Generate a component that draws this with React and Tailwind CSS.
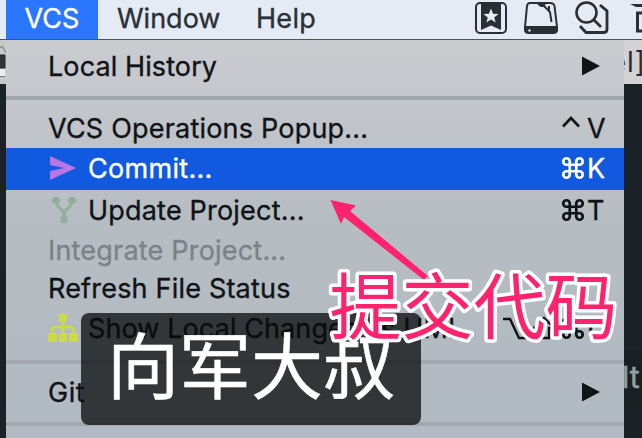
import React from "react";
import { Command } from "lucide-react";

const label = "whitespace-pre text-[27px] leading-none [-webkit-text-stroke:0.35px_currentColor]";

function Arrow() {
  return (
    <svg className="mr-6 h-5 w-[18px]" viewBox="0 0 18 20">
      <path d="M0 0.5L18 10L0 19.5Z" fill="#111417" />
    </svg>
  );
}

function Row({ text, size = "h-10", color = "text-[#101317]", track = "tracking-[0.2px]", icon, children }) {
  return (
    <div className={`flex shrink-0 items-center justify-between pl-[42px] ${size} ${color}`}>
      <div className="flex items-center">
        {icon && <div className="flex w-10 shrink-0 items-center">{icon}</div>}
        <span className={`${label} ${track}`}>{text}</span>
      </div>
      {children}
    </div>
  );
}

function Keys({ children, letter }) {
  return (
    <div className="flex items-center pr-[18px]">
      {children}
      <span className={`${label} w-[19px]`}>{letter}</span>
    </div>
  );
}

function Divider({ space }) {
  return <div className={`h-1 shrink-0 bg-[#a3a8ad] ${space}`} />;
}

function SendIcon() {
  return (
    <svg className="h-6 w-7" viewBox="0 0 28 24">
      <path d="M2 0L28 12L2 24V15L16 12L2 9Z" fill="#b975e6" />
    </svg>
  );
}

function BranchIcon() {
  return (
    <svg className="h-7 w-7" viewBox="0 0 28 28" fill="#8fb09a" stroke="#8fb09a">
      <circle cx="8" cy="4.500" r="3.500" />
      <circle cx="24" cy="4.500" r="3.500" />
      <circle cx="16" cy="23.500" r="3.500" />
      <path d="M8 5Q9 11 13 13Q16 15 16 22Q16 15 19 13Q23 11 24 5" fill="none" strokeWidth="3" />
    </svg>
  );
}

function TreeIcon() {
  return (
    <svg className="h-7 w-[30px]" viewBox="0 0 30 28" fill="#cbdc42">
      <rect x="11" y="0" width="8" height="8" />
      <rect x="0" y="19" width="9" height="9" rx="1" />
      <rect x="11" y="19" width="8" height="9" rx="1" />
      <rect x="21" y="19" width="9" height="9" rx="1" />
      <path d="M15 8V20M4.500 20V16Q4.500 13 8 13H22Q25.500 13 25.500 16V20" fill="none" stroke="#cbdc42" strokeWidth="2.500" />
    </svg>
  );
}

function StatusIcons() {
  return (
    <svg className="h-[39px] w-[172px]" viewBox="470 0 172 39" fill="none" stroke="#2a2f36" strokeWidth="2">
      <rect x="476" y="3" width="30" height="30" rx="4" />
      <path d="M481 3H501V30L491 25.500L481 30Z" fill="#2a2f36" stroke="none" />
      <path d="M491 8.500L493 13.700L498.500 14L494.200 17.400L495.700 22.500L491 19.600L486.300 22.500L487.800 17.400L483.500 14L489 13.700Z" fill="#e8eef6" stroke="none" />
      <path d="M530 3H550Q554 3 554.500 6L557 27V30Q557 33 553 33H529Q525 33 525 30V27L527 6Q527.500 3 530 3Z" />
      <path d="M525 26H557V30Q557 33 553 33H529Q525 33 525 30Z" fill="#2a2f36" stroke="none" />
      <circle cx="529.500" cy="30.500" r="1.200" fill="#e8eef6" stroke="none" />
      <path d="M538 3.500H545L543 6H541Z" fill="#2a2f36" />
      <path d="M543 5L550 12L551.500 22M549 6V12" />
      <circle cx="586.500" cy="12.500" r="10" strokeWidth="2.600" />
      <path d="M593.500 19.500L601 27M600 5L607 11V29Q607 32.500 604 32.500H586L580 26" strokeWidth="2.800" />
      <path d="M630 4H642V7H636Z" fill="#2a2f36" stroke="none" />
      <path d="M642 13H637.500V31H642" strokeWidth="3" />
    </svg>
  );
}

export default function App() {
  return (
    <div className="relative flex h-[438px] w-[642px] flex-col overflow-hidden bg-[#1b2227] font-[Inter,sans-serif]">
      <header className="flex h-10 shrink-0 items-stretch border-b border-[#4a5658] bg-[#e4ebf4] text-[#2b3036]">
        <div className="ml-1.5 flex w-[92px] items-center justify-center bg-[#2a76fe] pb-0.5 text-white">
          <span className={label}>VCS</span>
        </div>
        <div className="flex w-[140px] items-center pb-0.5 pl-[19px]"><span className={label}>Window</span></div>
        <div className="flex w-[232px] items-center pb-0.5 pl-[18px]"><span className={`${label} tracking-[0.3px]`}>Help</span></div>
        <StatusIcons />
      </header>
      <div className="flex min-h-0 flex-1">
        <aside className="w-1.5 shrink-0">
          <svg className="h-11 w-1.5" viewBox="0 0 6 44">
            <rect width="6" height="44" fill="#c8c8c8" />
            <path d="M0 8L2 6L6 13" fill="none" stroke="#777" />
            <path d="M0 15H5V28H0" fill="#333" stroke="#222" />
            <rect x="0" y="29" width="5" height="7" fill="#eee" />
            <path d="M0 36.500H5" stroke="#777" />
          </svg>
        </aside>
        <main className="flex w-[618px] shrink-0 flex-col bg-linear-to-b from-[#cbccd0] via-[#b6bdc2] via-45% to-[#b1b9c2] pt-1.5">
          <Row text="Local History" track="tracking-[0.1px]"><Arrow /></Row>
          <Divider space="mt-2.5 mb-2" />
          <Row text="VCS Operations Popup...">
            <Keys letter="V">
              <svg className="mr-[7px] mb-3 h-3 w-[18px]" viewBox="0 0 18 12" fill="none" stroke="#101317" strokeWidth="2.600"><path d="M1 10.500L9 2L17 10.500" /></svg>
            </Keys>
          </Row>
          <div className="bg-[#115adf] pb-0.5">
            <Row text="Commit..." color="text-white" track="tracking-[0.3px]" icon={<SendIcon />}>
              <Keys letter="K"><Command className="mr-px" size={26} strokeWidth={2.5} /></Keys>
            </Row>
          </div>
          <Row text="Update Project..." icon={<BranchIcon />}>
            <Keys letter="T"><Command className="mr-px" size={26} strokeWidth={2.5} /></Keys>
          </Row>
          <Row text="Integrate Project..." color="text-[#7c8388]" />
          <Row text="Refresh File Status" size="h-9" />
          <div className="mt-0.5">
            <Row text="Show Local Changes as UML" track="tracking-[0.1px]" icon={<TreeIcon />}>
              <Keys letter="U">
                <svg className="mr-1 h-6 w-[54px]" viewBox="0 0 54 24" fill="none" stroke="#101317" strokeWidth="2.400">
                  <path d="M1 3H8L17 22H25M15 3H25M42 2L32 12H37V22H47V12H52Z" />
                </svg>
                <Command className="mr-px" size={26} strokeWidth={2.5} />
              </Keys>
            </Row>
          </div>
          <Divider space="mt-3 mb-2" />
          <Row text="Git" track="tracking-[0.5px]"><Arrow /></Row>
          <Divider space="mt-2.5" />
        </main>
        <aside className="flex w-[18px] shrink-0 flex-col overflow-hidden">
          <div className="flex h-11 items-center justify-end bg-[#d2d1d3] text-[28px] tracking-[1px] text-[#292b30]"><span className="-mr-1">el]</span></div>
          <div className="mt-[266px] flex h-[54px] items-center bg-[#182022] text-[30px] text-[#92a0a5] [-webkit-text-stroke:0.5px_currentColor]"><span className="-ml-0.5">lt</span></div>
        </aside>
      </div>
      <div className="absolute top-[313px] left-[81px] flex h-[112px] w-[340px] items-center justify-center rounded-lg bg-[#080a0a]/75 pb-3.5 font-['Noto_Sans_CJK_SC',sans-serif] text-[72px] leading-none text-white [-webkit-text-stroke:0.5px_white]">
        <span className="whitespace-nowrap">向军大叔</span>
      </div>
      <svg className="absolute top-0 left-0 h-[438px] w-[642px]" viewBox="0 0 642 438">
        <path d="M330.500 200L356 205.500L350 211L428 276L424 280L344 217L341 224Z" fill="#ff226c" />
        <text x="329.5" y="333" fontSize="72" fill="#ff226c" stroke="#fff" strokeWidth="7" strokeLinejoin="round" paintOrder="stroke" className="font-['Noto_Sans_CJK_SC',sans-serif]">提交代码</text>
      </svg>
    </div>
  );
}
